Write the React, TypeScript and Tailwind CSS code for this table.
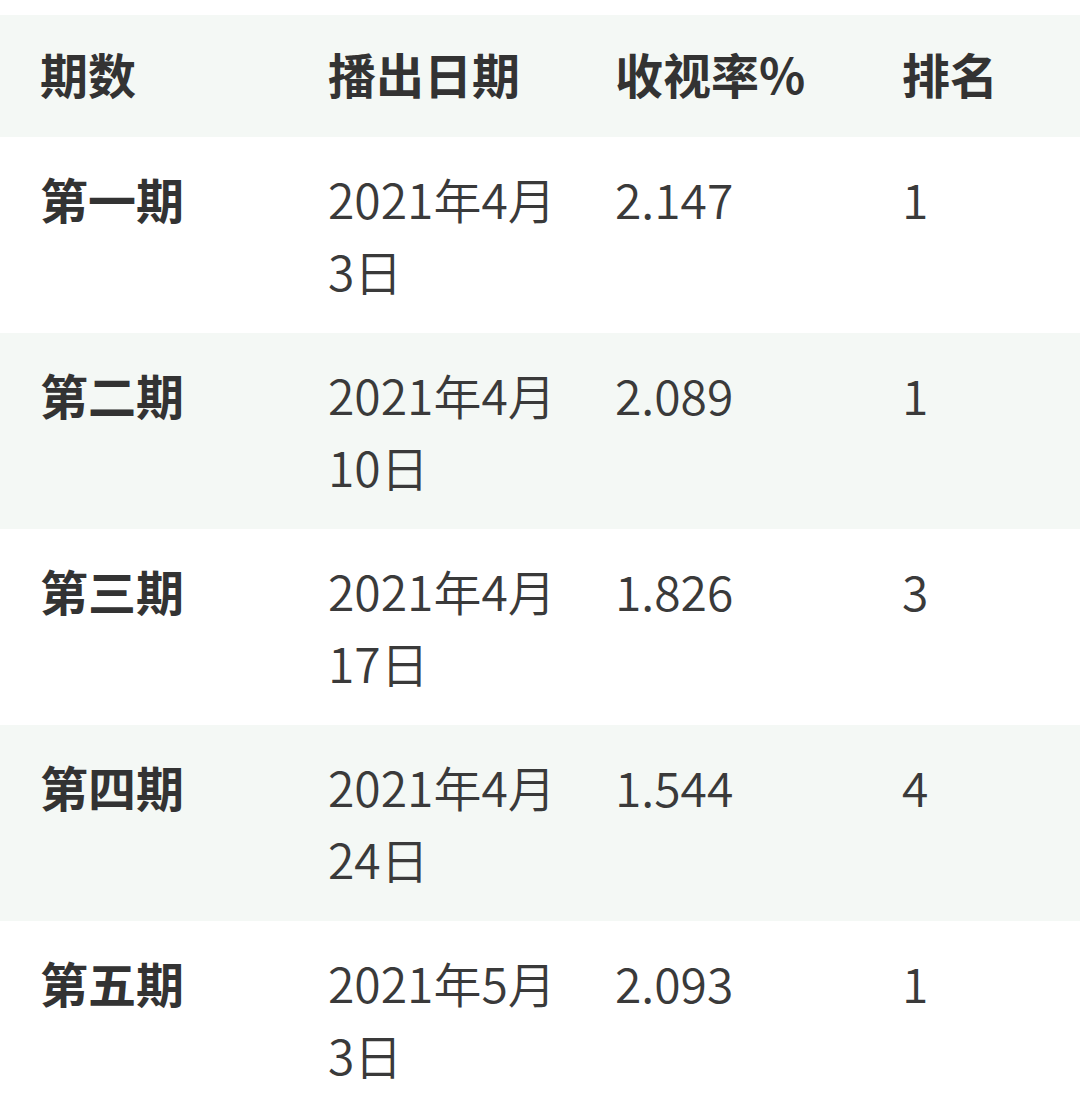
const head = ['期数', '播出日期', '收视率%', '排名']

const rows = [
  { ep: '第一期', date: '2021年4月3日', rate: '2.147', rank: '1' },
  { ep: '第二期', date: '2021年4月10日', rate: '2.089', rank: '1' },
  { ep: '第三期', date: '2021年4月17日', rate: '1.826', rank: '3' },
  { ep: '第四期', date: '2021年4月24日', rate: '1.544', rank: '4' },
  { ep: '第五期', date: '2021年5月3日', rate: '2.093', rank: '1' },
]

// Mobile-style ratings table: green header band, zebra rows.
export default function App() {
  return (
    <div
      className="min-h-screen bg-white pt-[15px] text-[#333]"
      style={{ fontFamily: '"Noto Sans CJK SC", "Noto Sans", sans-serif' }}
    >
      <div className="grid grid-cols-[288px_287px_287px_218px] bg-[#f4f8f5] pt-[22px] pb-[28px] text-[48px] font-bold leading-[72px]">
        {head.map((h) => (
          <div key={h} className="pl-10">
            {h}
          </div>
        ))}
      </div>
      {rows.map((r, i) => (
        <div
          key={r.ep}
          className={
            'grid grid-cols-[288px_287px_287px_218px] pt-[25px] pb-[27px] text-[48px] leading-[72px] ' +
            (i % 2 === 1 ? 'bg-[#f4f8f5]' : 'bg-white')
          }
        >
          <div className="pl-10 font-bold">{r.ep}</div>
          <div className="pl-10 pr-3 break-all font-[350] text-[#3a3a3a]">{r.date}</div>
          <div className="pl-10 font-[350] text-[#3a3a3a]">{r.rate}</div>
          <div className="pl-10 font-[350] text-[#3a3a3a]">{r.rank}</div>
        </div>
      ))}
    </div>
  )
}
